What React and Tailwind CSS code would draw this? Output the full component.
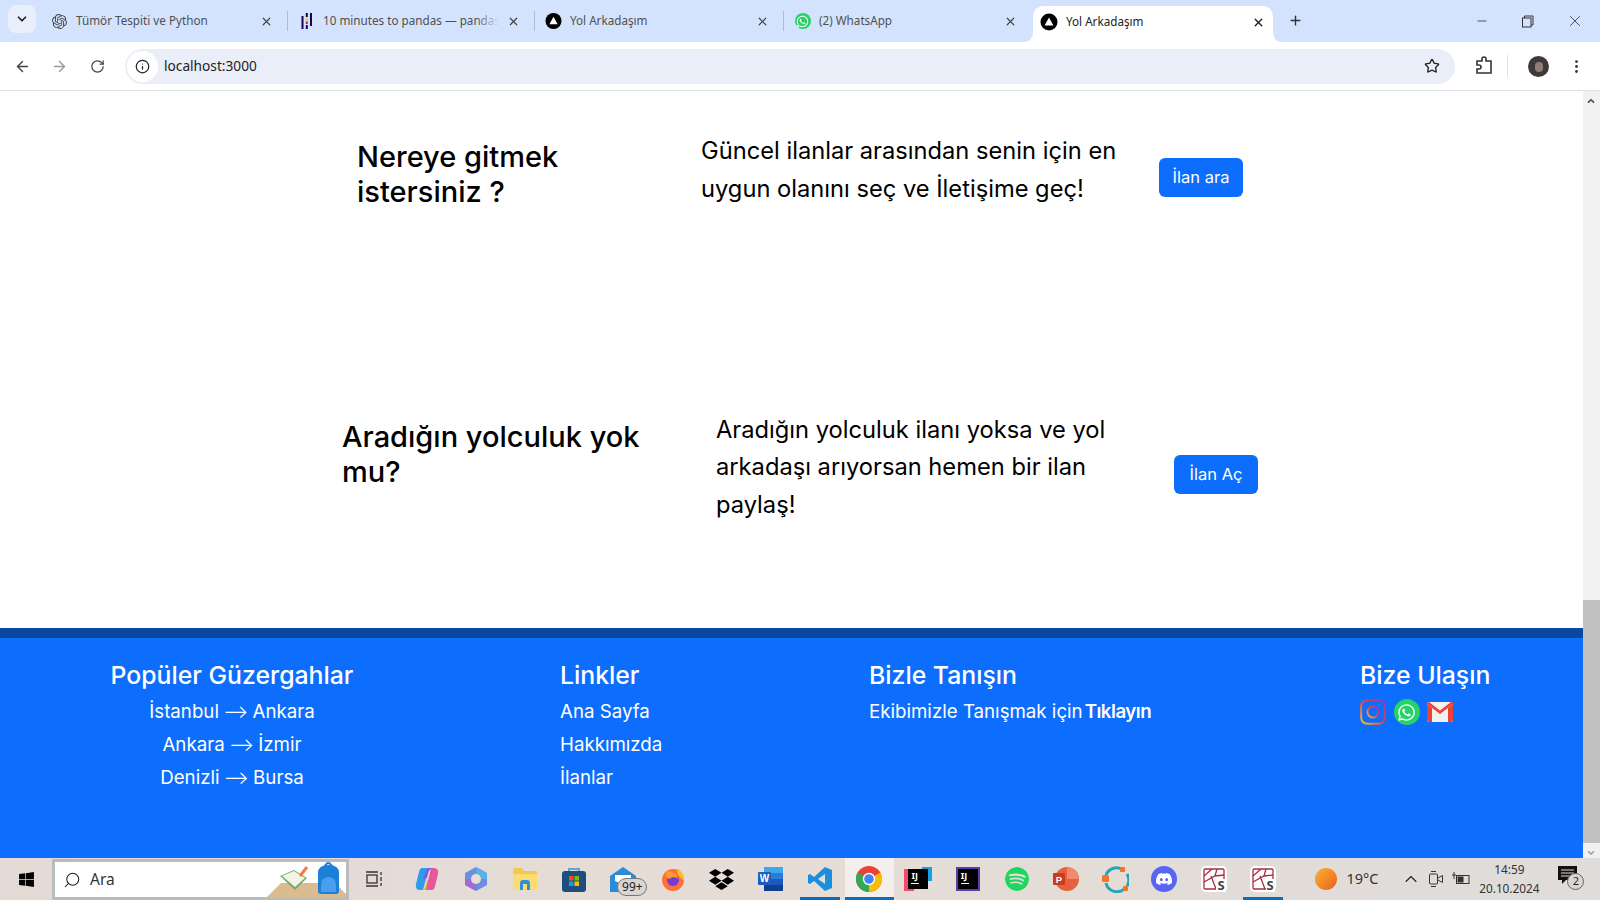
import React from "react"
import { ArrowLeft, ArrowRight, ChevronDown, ChevronUp, EllipsisVertical, Info, Minus, Plus, RotateCw, Search, Star, X } from "lucide-react"
import { FaWhatsapp, FaWindows } from "react-icons/fa"
import { SiDiscord, SiDropbox, SiOpenai, SiSpotify } from "react-icons/si"

const ArkadasFavicon = () => (
  <svg width="18" height="18" viewBox="0 0 18 18">
    <circle cx="9" cy="9" r="8.5" fill="#000" />
    <path d="M9 4.5 L13.4 12.5 H4.6 Z" fill="#fff" />
  </svg>
)

const PandasFavicon = () => (
  <svg width="14" height="18" viewBox="0 0 14 18">
    <rect x="1.5" y="4" width="2" height="13" fill="#150458" />
    <rect x="10" y="1" width="2" height="13" fill="#150458" />
    <rect x="5.8" y="1" width="2" height="4" fill="#150458" />
    <rect x="5.8" y="6" width="2" height="2.5" fill="#ffca00" />
    <rect x="5.8" y="9.5" width="2" height="2.5" fill="#e70488" />
    <rect x="5.8" y="13" width="2" height="4" fill="#150458" />
  </svg>
)

const WhatsappFavicon = () => (
  <span className="flex h-[16px] w-[16px] items-center justify-center rounded-full bg-[#25d366] text-white">
    <FaWhatsapp size={13} />
  </span>
)

const ChatFavicon = () => <SiOpenai size={15} className="text-[#444]" />

const tabs = [
  { title: "Tümör Tespiti ve Python", icon: <ChatFavicon />, width: "w-[247px] pr-[14px]" },
  { title: "10 minutes to pandas — pandas", icon: <PandasFavicon />, width: "w-[247px] pr-[14px]", fade: true },
  { title: "Yol Arkadaşım", icon: <ArkadasFavicon />, width: "w-[249px] pr-[14px]" },
  { title: "(2) WhatsApp", icon: <WhatsappFavicon />, width: "w-[249px] pr-[16px]" },
]

const TabStrip = () => (
  <div className="flex h-[42px] items-end bg-[#d3e3fd] text-[11.7px] text-[#505050]">
    <div className="mb-[4px] ml-[8px] mr-[5px] flex h-[28px] w-[28px] items-center justify-center self-center rounded-lg bg-[#e8effb] text-[#222]">
      <ChevronDown size={14} strokeWidth={3} />
    </div>
    <div className="flex h-[42px] items-center">
      {tabs.map((tab, index) => (
        <div key={tab.title} className={`flex h-[20px] items-center pl-[10px] ${index < 3 ? "border-r border-[#a9bdd9]" : ""} ${tab.width}`}>
          <span className="flex w-[17px] shrink-0 items-center justify-center">{tab.icon}</span>
          <span className="relative ml-[8px] min-w-0 flex-1 overflow-hidden whitespace-nowrap">
            {tab.title}
            {tab.fade && <span className="absolute inset-y-0 right-0 w-[24px] bg-linear-to-r from-transparent to-[#d3e3fd]" />}
          </span>
          <X size={13} strokeWidth={2.2} className="ml-[8px] shrink-0 text-[#444]" />
        </div>
      ))}
    </div>
    <div className="relative flex h-[36px] w-[240px] items-center rounded-t-[10px] bg-white pb-[4px] pl-[7px] pr-[8px] text-[#222]">
      <svg width="10" height="10" viewBox="0 0 10 10" className="absolute -left-[10px] bottom-0">
        <path d="M10 0 V10 H0 Q10 10 10 0 Z" fill="#fff" />
      </svg>
      <svg width="10" height="10" viewBox="0 0 10 10" className="absolute -right-[10px] bottom-0">
        <path d="M0 0 V10 H10 Q0 10 0 0 Z" fill="#fff" />
      </svg>
      <ArkadasFavicon />
      <span className="ml-[8px] flex-1 whitespace-nowrap">Yol Arkadaşım</span>
      <X size={13} strokeWidth={2.6} />
    </div>
    <Plus size={15} strokeWidth={2.2} className="mb-[14px] ml-[15px] text-[#333]" />
    <div className="mb-[12px] ml-auto flex items-center text-[#333]">
      <Minus size={14} strokeWidth={1.4} className="mr-[32px]" />
      <svg width="13" height="13" viewBox="0 0 13 13" fill="none" stroke="#333" className="mr-[32px]">
        <rect x="1.5" y="3" width="8.5" height="9" />
        <path d="M3.5 3V1H12V10H10" />
      </svg>
      <X size={18} strokeWidth={1.1} className="mr-[16px]" />
    </div>
  </div>
)

const Toolbar = () => (
  <div className="flex h-[49px] items-center border-b border-[#dfe1e5] bg-white text-[#444]">
    <ArrowLeft size={17} className="ml-[14px]" />
    <ArrowRight size={17} className="ml-[20px] text-[#9a9a9a]" />
    <RotateCw size={15} className="ml-[22px]" />
    <div className="ml-[20px] flex h-[35px] w-[1330px] items-center rounded-full bg-[#e9eef8]">
      <span className="ml-[2px] flex h-[31px] w-[31px] items-center justify-center rounded-full bg-white">
        <Info size={15} className="text-[#222]" />
      </span>
      <span className="ml-[6px] flex-1 text-[13.7px] text-[#222]">localhost:3000</span>
      <Star size={16} className="mr-[15px] text-[#222]" />
    </div>
    <svg width="18" height="20" viewBox="0 0 18 20" fill="none" stroke="#333" strokeWidth="1.6" className="ml-[20px]">
      <path d="M2 5 H7 V3 Q7 1 9 1 Q11 1 11 3 V5 H16 V17 H2 V13 H4 Q6 13 6 11 Q6 9 4 9 H2 Z" />
    </svg>
    <span className="ml-[14px] h-[22px] border-l border-[#dfe1e5]" />
    <span className="ml-[20px] flex h-[21px] w-[21px] flex-col items-center overflow-hidden rounded-full bg-[#3f3a38]">
      <span className="mt-[6px] h-[10px] w-[8px] rounded-full bg-[#8f7f78]" />
    </span>
    <EllipsisVertical size={17} className="ml-[19px] text-[#333]" />
  </div>
)

const FooterHeading = ({ children }) => <h3 className="whitespace-nowrap text-[24.8px] leading-[30px] font-medium">{children}</h3>

const Arrow = () => <span className="-mx-[1px] font-light">⟶</span>

const Footer = () => (
  <footer className="flex h-[230px] border-t-[10px] border-[#0a47a0] bg-[#0d6efd] pl-[110px] pt-[22px] text-white">
    <div className="w-[450px]">
      <div className="w-[244px] text-center">
        <FooterHeading>Popüler Güzergahlar</FooterHeading>
        <ul className="mt-[6px] text-[18.7px] leading-[32.8px]">
          <li>İstanbul <Arrow /> Ankara</li>
          <li>Ankara <Arrow /> İzmir</li>
          <li>Denizli <Arrow /> Bursa</li>
        </ul>
      </div>
    </div>
    <div className="w-[309px]">
      <FooterHeading>Linkler</FooterHeading>
      <ul className="mt-[6px] text-[18.7px] leading-[32.8px]">
        <li>Ana Sayfa</li>
        <li>Hakkımızda</li>
        <li>İlanlar</li>
      </ul>
    </div>
    <div className="w-[491px]">
      <FooterHeading>Bizle Tanışın</FooterHeading>
      <p className="mt-[6px] text-[18.7px] leading-[32.8px]">Ekibimizle Tanışmak için<span className="ml-[2px] font-semibold tracking-[-0.5px]">Tıklayın</span></p>
    </div>
    <div>
      <FooterHeading>Bize Ulaşın</FooterHeading>
      <div className="mt-[9px] flex gap-[7.5px]">
        <svg width="26" height="26" viewBox="0 0 26 26" fill="none">
          <defs>
            <linearGradient id="insta" x1="0" y1="1" x2="1" y2="0">
              <stop offset="0" stopColor="#fdc03a" />
              <stop offset="0.5" stopColor="#e8403f" />
              <stop offset="1" stopColor="#8a3ac8" />
            </linearGradient>
          </defs>
          <rect x="1.2" y="1.2" width="23.6" height="23.6" rx="6" stroke="url(#insta)" strokeWidth="2" />
          <circle cx="13" cy="13" r="5.5" stroke="url(#insta)" strokeWidth="2" />
          <circle cx="19.5" cy="6.5" r="1" fill="#c13ab0" />
        </svg>
        <span className="flex h-[26px] w-[26px] items-center justify-center rounded-full bg-[#25d366]">
          <FaWhatsapp size={19} />
        </span>
        <svg width="26" height="26" viewBox="0 0 26 26">
          <rect x="0" y="3" width="26" height="20" rx="2" fill="#f1f1f1" />
          <path d="M0 5 L13 15 L26 5 V3 Q26 3 24 3 L13 11.5 L2 3 Q0 3 0 5 Z" fill="#ea4335" />
          <path d="M0 5 L5 9 V23 H2 Q0 23 0 21 Z M26 5 L21 9 V23 H24 Q26 23 26 21 Z" fill="#ea4335" />
        </svg>
      </div>
    </div>
  </footer>
)

const Scrollbar = () => (
  <div className="flex w-[17px] flex-col bg-[#f1f1f1]">
    <ChevronUp size={10} strokeWidth={4} className="ml-[3px] mt-[5px] text-[#505050]" />
    <div className="ml-auto mt-[494px] h-[245px] w-full bg-[#c1c1c1]" />
    <ChevronDown size={10} strokeWidth={4} className="ml-[3px] mt-[5px] text-[#a3a3a3]" />
  </div>
)

const Button = ({ children, className }) => (
  <button className={`h-[39px] w-[84px] shrink-0 rounded-md bg-[#0d6efd] text-center text-[16.5px] text-white ${className}`}>{children}</button>
)

const Content = () => (
  <div className="flex h-[767px] flex-col overflow-hidden">
    <section className="ml-[357px] flex h-[299px] items-start pt-[41px] text-black">
      <h2 className="mt-[7px] w-[310px] text-[29px] leading-[35px] font-medium">Nereye gitmek istersiniz ?</h2>
      <p className="ml-[34px] w-[430px] text-[23.7px] leading-[37.5px]">Güncel ilanlar arasından senin için en uygun olanını seç ve İletişime geç!</p>
      <Button className="ml-[28px] mt-[26px]">İlan ara</Button>
    </section>
    <section className="ml-[342px] flex h-[238px] items-start pt-[20.5px] text-black">
      <h2 className="mt-[8.5px] w-[320px] text-[29px] leading-[35px] font-medium">Aradığın yolculuk yok mu?</h2>
      <p className="ml-[54px] w-[430px] text-[23.7px] leading-[37.5px]">Aradığın yolculuk ilanı yoksa ve yol arkadaşı arıyorsan hemen bir ilan paylaş!</p>
      <Button className="ml-[28px] mt-[44.5px]">İlan Aç</Button>
    </section>
    <Footer />
  </div>
)

const Copilot = () => (
  <svg width="26" height="26" viewBox="0 0 26 26">
    <path d="M8 2 H15 L9 24 H6 Q1 24 2 18 L5 6 Q6 2 8 2 Z" fill="#2f9bee" />
    <path d="M6 24 Q11 24 12 18 L13 14 L17 13 L14 22 Q13 24 11 24 Z" fill="#f2b13c" />
    <path d="M18 24 H12 L17 2 H20 Q25 2 24 8 L21 20 Q20 24 18 24 Z" fill="#e9569a" />
    <path d="M20 2 Q15 2 14 8 L13 12 L9 13 L12 4 Q13 2 15 2 Z" fill="#7a5fe0" />
  </svg>
)

const HexLogo = () => (
  <svg width="24" height="26" viewBox="0 0 24 26">
    <path d="M12 1 L23 7 V19 L12 25 L1 19 V7 Z" fill="#6b8fe0" />
    <path d="M12 1 L23 7 V13 H12 Z" fill="#5bb0e8" />
    <path d="M1 13 H12 V25 L1 19 Z" fill="#a36ad6" />
    <circle cx="12" cy="13" r="5" fill="#e6ddd6" />
  </svg>
)

const Folder = () => (
  <svg width="24" height="22" viewBox="0 0 24 22">
    <path d="M0 2 Q0 0 2 0 H9 L11 3 H24 V20 Q24 22 22 22 H2 Q0 22 0 20 Z" fill="#f6c84a" />
    <path d="M0 6 H24 V20 Q24 22 22 22 H2 Q0 22 0 20 Z" fill="#fbdc71" />
    <path d="M7 22 V15 Q7 12 10 12 H14 Q17 12 17 15 V22 H14 V16 H10 V22 Z" fill="#2f8fdc" />
  </svg>
)

const StoreIcon = () => (
  <svg width="24" height="25" viewBox="0 0 24 25">
    <path d="M7 5 V2 H17 V5" fill="none" stroke="#5ea7dd" strokeWidth="2" />
    <rect x="0" y="4" width="24" height="21" rx="3" fill="#1f4d7d" />
    <rect x="7" y="9" width="4.5" height="4.5" fill="#f25022" />
    <rect x="12.5" y="9" width="4.5" height="4.5" fill="#7fba00" />
    <rect x="7" y="14.5" width="4.5" height="4.5" fill="#00a4ef" />
    <rect x="12.5" y="14.5" width="4.5" height="4.5" fill="#ffb900" />
  </svg>
)

const MailIcon = () => (
  <span className="relative flex h-[26px] w-[26px] items-center justify-center">
    <svg width="26" height="25" viewBox="0 0 26 25">
      <path d="M13 0 L26 9 V25 H0 V9 Z" fill="#2a8bd8" />
      <path d="M5 8 H21 V14 L13 18 L5 14 Z" fill="#fff" />
    </svg>
    <span className="absolute left-[7px] top-[12px] flex h-[18px] w-[30px] items-center justify-center rounded-full border border-[#777] bg-[#d9d5d2] text-[12px] text-[#222]">99+</span>
  </span>
)

const Firefox = () => (
  <svg width="24" height="24" viewBox="0 0 24 24">
    <circle cx="12" cy="13" r="11" fill="#ff7139" />
    <path d="M16 1 Q24 6 23 14 L17 8 Z" fill="#ffbd2e" />
    <circle cx="12" cy="13" r="6" fill="#7b3bd0" />
    <path d="M6 4 Q3 10 8 12 Q13 8 17 12 Q16 6 11 5 Z" fill="#ff9a2e" />
  </svg>
)

const Word = () => (
  <svg width="25" height="24" viewBox="0 0 25 24">
    <rect x="6" y="0" width="19" height="6" fill="#41a5ee" />
    <rect x="6" y="6" width="19" height="6" fill="#2b7cd3" />
    <rect x="6" y="12" width="19" height="6" fill="#185abd" />
    <rect x="6" y="18" width="19" height="6" fill="#103f91" />
    <rect x="0" y="5" width="13" height="13" rx="1" fill="#1a5fc0" />
    <text x="6.5" y="15" textAnchor="middle" fontSize="10" fontWeight="700" fill="#fff" fontFamily="Liberation Sans, sans-serif">W</text>
  </svg>
)

const VsCode = () => (
  <svg width="26" height="26" viewBox="0 0 26 26">
    <path d="M18 1 L25 4 V22 L18 25 L7 15 L3 18 L1 17 V9 L3 8 L7 11 Z M18 8 L11 13 L18 18 Z" fill="#1c8fdc" />
  </svg>
)

const Chrome = () => (
  <svg width="26" height="26" viewBox="0 0 26 26">
    <circle cx="13" cy="13" r="13" fill="#ea4335" />
    <path d="M13 13 L1.7 6.5 A13 13 0 0 0 13 26 Z" fill="#34a853" />
    <path d="M13 13 L13 26 A13 13 0 0 0 24.3 6.5 Z" fill="#fbbc05" />
    <circle cx="13" cy="13" r="6.2" fill="#fff" />
    <circle cx="13" cy="13" r="4.8" fill="#4285f4" />
  </svg>
)

const JetBrains = ({ variant }) => (
  <span className={`relative flex h-[24px] w-[24px] items-center justify-center ${variant === "ultimate" ? "border-2 border-[#5b3bb0]" : ""}`}>
    {variant !== "ultimate" && <span className="absolute -left-[2px] top-[2px] h-[22px] w-[10px] bg-[#ef4d6a]" />}
    {variant !== "ultimate" && <span className="absolute -right-[2px] top-[0px] h-[14px] w-[10px] bg-[#18a0e0]" />}
    <span className="relative flex h-[20px] w-[20px] flex-col bg-black pl-[3px] pt-[2px] text-[9px] leading-[9px] font-bold text-white">
      IJ
      <span className="mt-[3px] h-[1px] w-[8px] bg-white" />
    </span>
  </span>
)

const Powerpoint = () => (
  <svg width="26" height="26" viewBox="0 0 26 26">
    <circle cx="14" cy="13" r="12" fill="#e5613f" />
    <path d="M14 1 A12 12 0 0 1 26 13 H14 Z" fill="#f08a6b" />
    <rect x="0" y="7" width="12" height="12" rx="1" fill="#c43e1c" />
    <text x="6" y="16.5" textAnchor="middle" fontSize="9.5" fontWeight="700" fill="#fff" fontFamily="Liberation Sans, sans-serif">P</text>
  </svg>
)

const OrangeRing = () => (
  <svg width="27" height="27" viewBox="0 0 27 27" fill="none">
    <path d="M20 3.5 A11 11 0 0 0 4 9" stroke="#2aa3b8" strokeWidth="3" />
    <path d="M4 17 A11 11 0 0 0 23 22 M25 8 A11 11 0 0 1 25 20" stroke="#2aa3b8" strokeWidth="3" />
    <rect x="0" y="9" width="7" height="7" rx="1.5" fill="#f0752a" />
    <rect x="18" y="1" width="5" height="5" rx="1" fill="#f0752a" />
    <rect x="21" y="20" width="5" height="5" rx="1" fill="#f0752a" />
  </svg>
)

const SketchIcon = () => (
  <span className="relative flex h-[26px] w-[26px] items-center justify-center rounded-[5px] bg-white">
    <svg width="22" height="22" viewBox="0 0 22 22" fill="none" stroke="#a5303a" strokeWidth="1.3">
      <rect x="1" y="1" width="20" height="20" rx="1" />
      <path d="M1 8 L9 1 M1 14 L12 8 L21 7 M8 8 L13 21 M14 1 L12 8" />
    </svg>
    <span className="absolute bottom-[0px] right-[1px] bg-white px-[1px] text-[13px] leading-[13px] font-bold text-[#444]">S</span>
  </span>
)

const taskItems = [
  { id: "copilot", icon: <Copilot /> },
  { id: "hex", icon: <HexLogo /> },
  { id: "folder", icon: <Folder /> },
  { id: "store", icon: <StoreIcon /> },
  { id: "mail", icon: <MailIcon /> },
  { id: "firefox", icon: <Firefox /> },
  { id: "dropbox", icon: <SiDropbox size={25} className="text-black" /> },
  { id: "word", icon: <Word /> },
  { id: "vscode", icon: <VsCode />, running: true },
  { id: "chrome", icon: <Chrome />, running: true, active: true },
  { id: "rider", icon: <JetBrains /> },
  { id: "idea", icon: <JetBrains variant="ultimate" /> },
  { id: "spotify", icon: <SiSpotify size={24} className="rounded-full text-[#1ed760]" /> },
  { id: "ppt", icon: <Powerpoint /> },
  { id: "ring", icon: <OrangeRing /> },
  { id: "discord", icon: <span className="flex h-[26px] w-[26px] items-center justify-center rounded-full bg-[#5865f2] text-white"><SiDiscord size={16} /></span> },
  { id: "sketch1", icon: <SketchIcon /> },
  { id: "sketch2", icon: <SketchIcon />, running: true },
]

const Taskbar = () => (
  <div className="flex h-[42px] items-stretch bg-linear-to-r from-[#e3dad6] via-[#e6ddd6] to-[#dfdcda] text-[#222]">
    <div className="flex w-[52px] items-center justify-center">
      <FaWindows size={17} className="text-black" />
    </div>
    <div className="relative mt-[1px] flex w-[297px] items-center overflow-hidden border-[3px] border-[#b9bcbd] bg-white pl-[8px]">
      <Search size={18} strokeWidth={1.4} className="-scale-x-100 text-[#222]" />
      <span className="ml-[9px] text-[15.5px] text-[#333]">Ara</span>
      <svg width="82" height="14" viewBox="0 0 82 14" className="absolute -right-[3px] bottom-0">
        <path d="M14 0 H68 L82 14 H0 Z" fill="#dcbb8e" />
      </svg>
      <svg width="30" height="28" viewBox="0 0 30 28" className="absolute bottom-[3px] right-[37px]">
        <path d="M1 10 L15 4 L28 12 L16 24 Z" fill="#6fae6a" />
        <path d="M3 10 L15 5 L26 12 L16 21 Z" fill="#f5f3e6" />
        <path d="M21 10 L28 1" stroke="#ef7f3a" strokeWidth="3" />
      </svg>
      <svg width="21" height="33" viewBox="0 0 21 33" className="absolute bottom-[3px] right-[7px]">
        <path d="M7 5 Q10 -1 14 5" fill="none" stroke="#1c7fd0" strokeWidth="2" />
        <path d="M0 12 Q0 4 10.5 4 Q21 4 21 12 V30 Q21 33 18 33 H3 Q0 33 0 30 Z" fill="#1c7fd8" />
        <path d="M3 25 Q3 16 10.5 16 Q18 16 18 25 V31 H3 Z" fill="#4a9ef0" />
      </svg>
    </div>
    <div className="mr-[3px] flex w-[50px] items-center justify-center">
      <svg width="18" height="18" viewBox="0 0 18 18" fill="none" stroke="#333" strokeWidth="1.3">
        <path d="M1 2 H13 M1 16 H13" />
        <rect x="2" y="5" width="10" height="8" />
        <path d="M16 2 V5 M16 7 V11 M16 13 V16" />
      </svg>
    </div>
    <div className="flex">
      {taskItems.map(item => (
        <div key={item.id} className={`relative flex w-[49.2px] items-center justify-center ${item.active ? "bg-[#f3efec]" : ""}`}>
          {item.icon}
          {item.running && <span className={`absolute bottom-0 h-[3px] bg-[#0f6cbd] ${item.active ? "w-full" : "w-[40px]"}`} />}
        </div>
      ))}
    </div>
    <div className="ml-[28px] flex items-center">
      <span className="h-[22px] w-[22px] rounded-full bg-linear-to-br from-[#f8b133] to-[#e8601c]" />
      <span className="ml-[9px] w-[34px] whitespace-nowrap text-[14.5px] text-[#333]">19°C</span>
      <ChevronUp size={20} strokeWidth={1.3} className="ml-[21px]" />
      <svg width="16" height="18" viewBox="0 0 16 18" fill="none" stroke="#333" className="ml-[7px]">
        <rect x="1.5" y="4" width="8" height="10" rx="1" />
        <path d="M10 8 L14.5 5.5 V12.5 L10 10 M3 1.5 H8 M3 16.5 H8" />
      </svg>
      <svg width="18" height="14" viewBox="0 0 18 14" fill="none" stroke="#333" className="ml-[8px]">
        <rect x="4.5" y="3.5" width="12.5" height="8" />
        <rect x="6" y="5" width="5" height="5" fill="#333" />
        <path d="M0 3 H4 M2 0 V7" />
      </svg>
      <div className="ml-[1px] w-[76px] text-center text-[11.8px] leading-[19.5px] text-[#333]">
        <div>14:59</div>
        <div>20.10.2024</div>
      </div>
      <div className="relative ml-[11px] h-[26px] w-[26px]">
        <svg width="19" height="19" viewBox="0 0 19 19">
          <path d="M0 0 H19 V14 H8 L4 18 V14 H0 Z" fill="#111" />
          <path d="M3 4 H16 M3 7 H16 M3 10 H12" stroke="#ddd" />
        </svg>
        <span className="absolute left-[9px] top-[7px] flex h-[17px] w-[17px] items-center justify-center rounded-full border border-[#666] bg-[#d9d6d3] text-[11px] text-[#222]">2</span>
      </div>
    </div>
  </div>
)

export default function App() {
  return (
    <div className="flex h-[900px] w-[1600px] flex-col overflow-hidden bg-white font-['Inter',sans-serif]">
      <div className="font-['Noto_Sans',sans-serif]">
        <TabStrip />
        <Toolbar />
      </div>
      <div className="flex h-[767px] items-stretch overflow-hidden">
        <div className="w-[1583px]">
          <Content />
        </div>
        <Scrollbar />
      </div>
      <div className="font-['Noto_Sans',sans-serif]">
        <Taskbar />
      </div>
    </div>
  )
}
